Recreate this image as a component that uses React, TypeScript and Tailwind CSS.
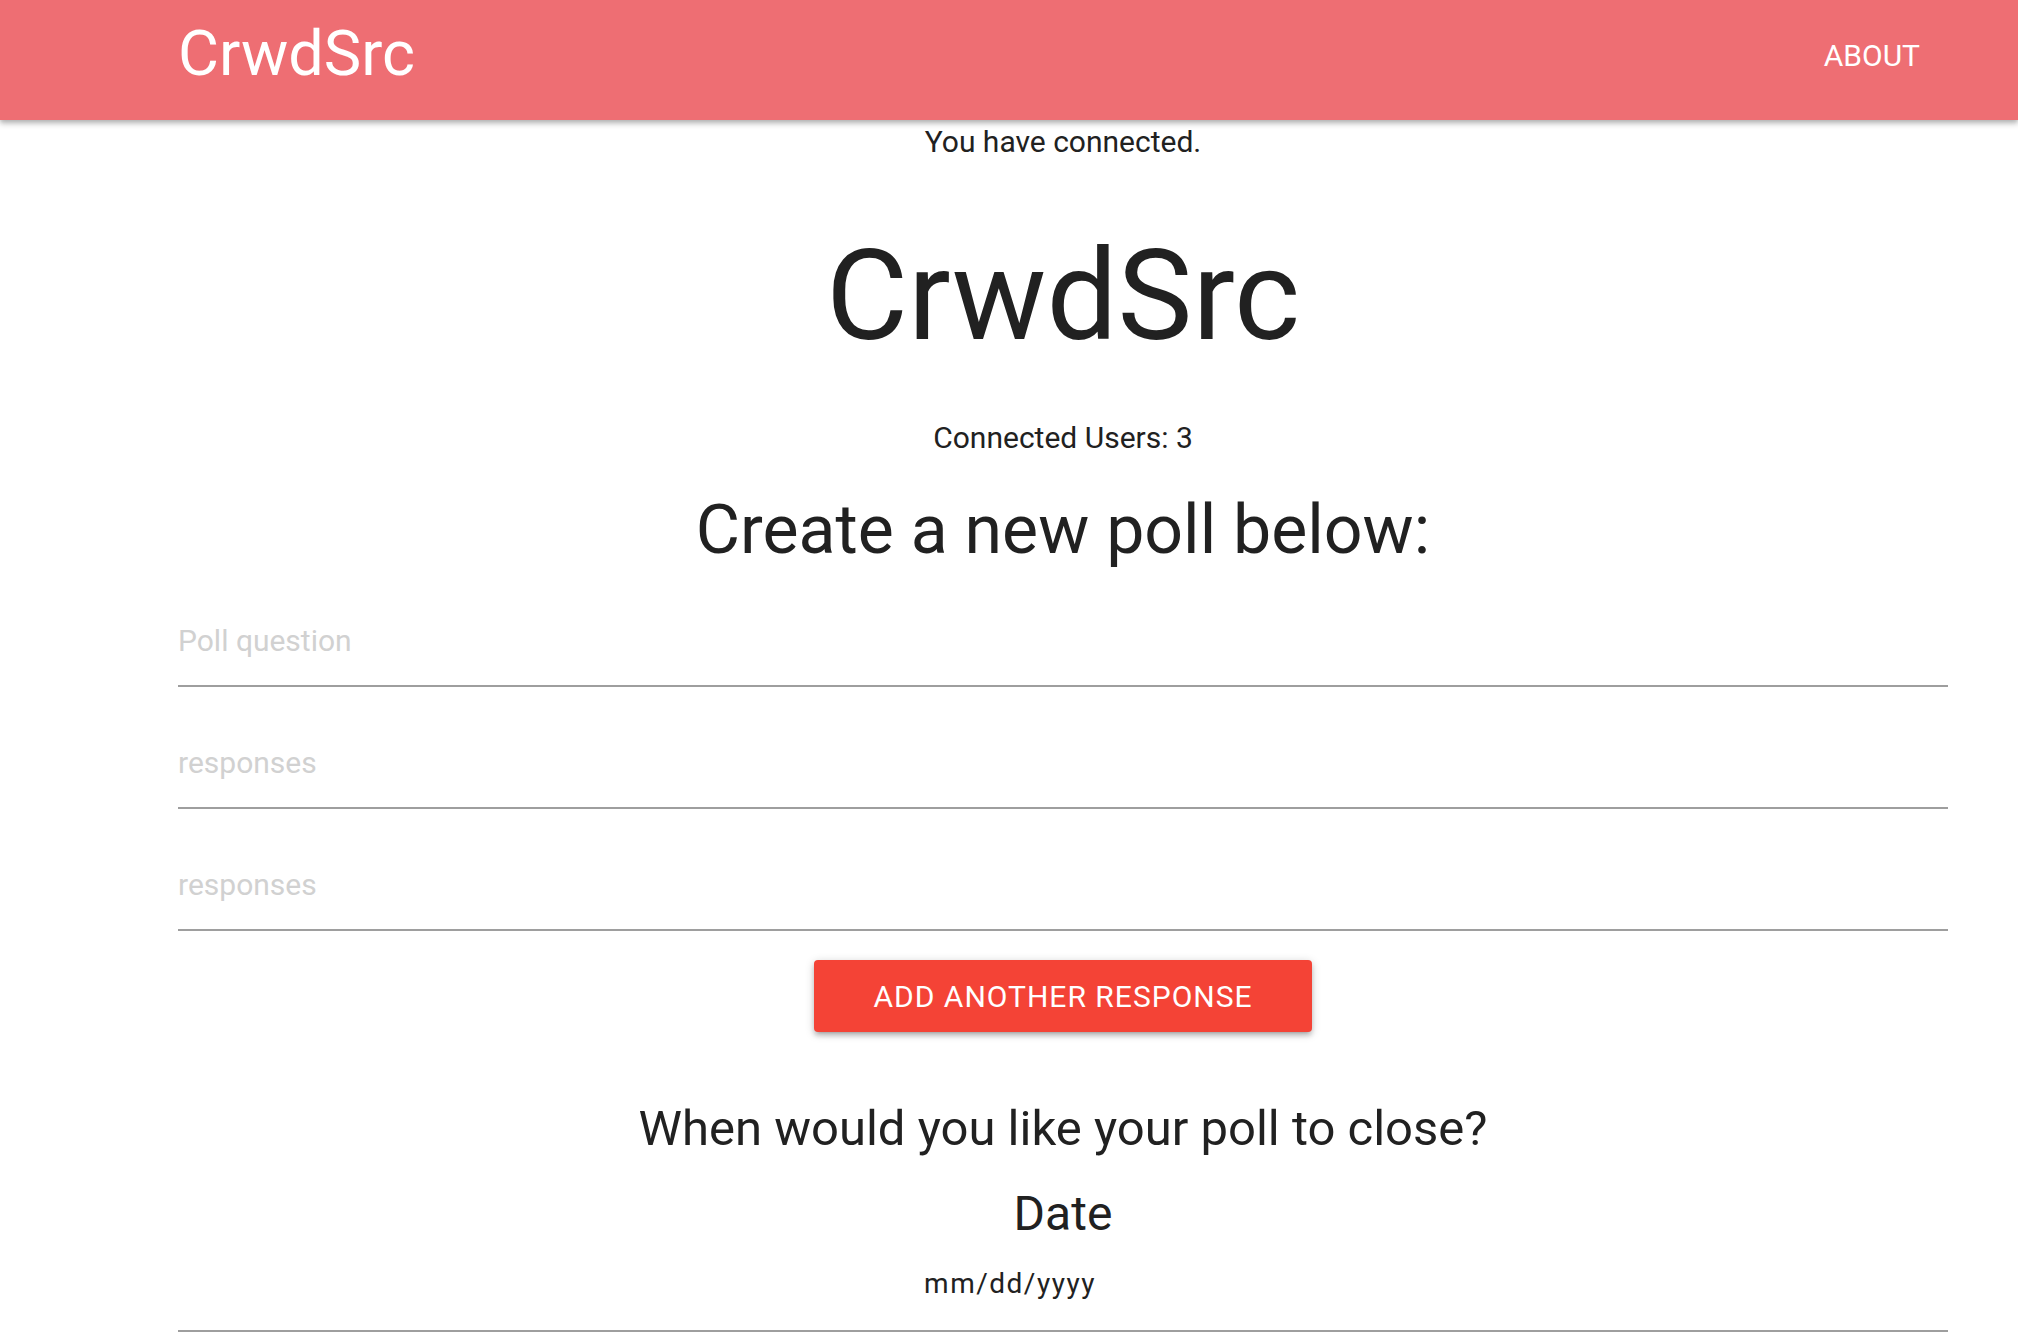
import React from "react"

const font = { fontFamily: "Roboto, 'Noto Sans', sans-serif" }

function Navbar() {
  return (
    <nav className="h-[120px] bg-[#ee6e73] shadow-[0_4px_6px_0_rgba(0,0,0,0.2),0_2px_4px_0_rgba(0,0,0,0.14)] relative z-10">
      <div className="ml-[178px] w-[1770px] flex justify-between items-start">
        <a className="text-white text-[63px] leading-[108px]">CrwdSrc</a>
        <ul className="flex">
          <li>
            <a className="block px-[28px] text-white text-[30px] leading-[112px]">ABOUT</a>
          </li>
        </ul>
      </div>
    </nav>
  )
}

function TextInput({ placeholder, className = "" }: { placeholder: string; className?: string }) {
  return (
    <input
      type="text"
      placeholder={placeholder}
      className={`block w-full h-[92px] border-b-2 border-[#9e9e9e] bg-transparent text-[30px] text-[#212121] outline-none placeholder:text-[#d1d1d1] ${className}`}
      style={font}
    />
  )
}

export default function App() {
  return (
    <div className="min-h-screen bg-white text-[#212121]" style={font}>
      <Navbar />
      <main className="ml-[178px] w-[1770px] text-center">
        <p className="text-[30px] leading-[44px]">You have connected.</p>
        <h1 className="mt-[62px] text-[126px] leading-[140px]">CrwdSrc</h1>
        <p className="mt-[50px] text-[30px] leading-[44px]">Connected Users: 3</p>
        <h4 className="mt-[30px] text-[68px] leading-[80px]">Create a new poll below:</h4>

        <form className="text-left">
          <TextInput placeholder="Poll question" className="mt-[25px]" />
          <TextInput placeholder="responses" className="mt-[30px]" />
          <TextInput placeholder="responses" className="mt-[30px]" />
        </form>

        <button className="mt-[29px] h-[72px] w-[498px] rounded-[4px] bg-[#f44336] text-white text-[30px] tracking-[1px] uppercase shadow-[0_4px_4px_0_rgba(0,0,0,0.14),0_5px_2px_-4px_rgba(0,0,0,0.12),0_2px_10px_0_rgba(0,0,0,0.2)]">
          Add another response
        </button>

        <h5 className="mt-[67px] text-[49px] leading-[60px]">When would you like your poll to close?</h5>
        <h6 className="mt-[27px] text-[48px] leading-[56px]">Date</h6>
        <div className="pt-[24px] pb-[28px] pr-[106px] border-b-2 border-[#9e9e9e]">
          <span className="text-[28px] leading-[36px] tracking-[1.5px]">mm/dd/yyyy</span>
        </div>
      </main>
    </div>
  )
}
